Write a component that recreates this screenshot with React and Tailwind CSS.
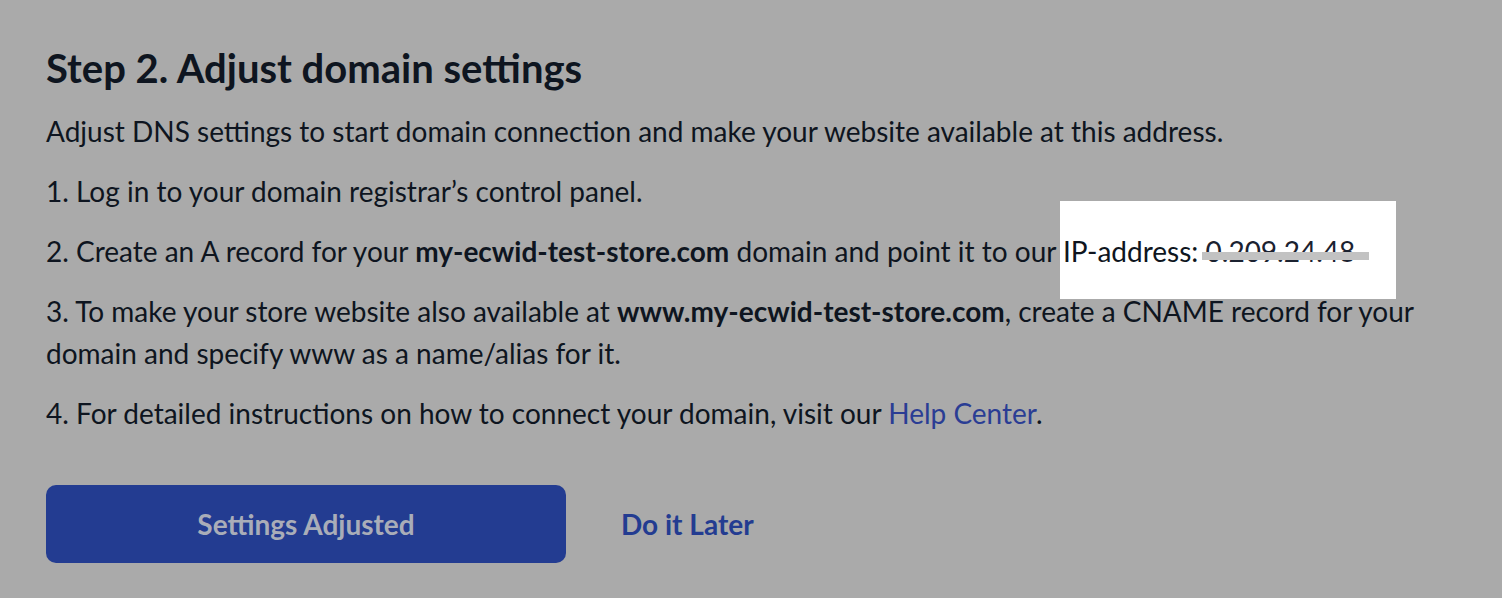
import React from 'react';

export default function App() {
  return (
    <div className="min-h-screen w-full bg-[#aaaaaa] font-['Lato',sans-serif] text-[#0e1520]">
      <div className="px-[46px] pt-[44px] pr-[60px]">
        <h1 className="text-[40px] leading-[48px] font-bold">Step 2. Adjust domain settings</h1>
        <p className="mt-[18px] text-[28px] leading-[42px]">
          Adjust DNS settings to start domain connection and make your website available at this address.
        </p>
        <p className="mt-[18px] text-[28px] leading-[42px]">1. Log in to your domain registrar’s control panel.</p>
        <p className="mt-[18px] text-[28px] leading-[42px]">
          2. Create an A record for your <b className="font-bold">my-ecwid-test-store.com</b> domain and point it to our{' '}
          <span className="relative inline-block">
            <span className="absolute left-[-3px] right-[-41px] top-[-29px] bottom-[-27px] bg-white"></span>
            <span className="relative">IP-address: </span>
            <span className="relative text-[#1b2230]">
              0.209.24.48
              <span className="absolute left-[-4px] right-[-14px] top-[18px] h-[8px] bg-[#c2c2c2]"></span>
            </span>
          </span>
        </p>
        <p className="mt-[18px] text-[28px] leading-[42px]">
          3. To make your store website also available at <b className="font-bold">www.my-ecwid-test-store.com</b>, create a CNAME record for your domain and specify www as a name/alias for it.
        </p>
        <p className="mt-[18px] text-[28px] leading-[42px]">
          4. For detailed instructions on how to connect your domain, visit our <a className="text-[#2a3d94]">Help Center</a>.
        </p>
        <div className="mt-[51px] flex items-center gap-[55px]">
          <button className="w-[520px] h-[78px] rounded-[10px] bg-[#233c91] text-[28px] font-bold text-[#a9adb8]">
            Settings Adjusted
          </button>
          <a className="text-[28px] font-bold text-[#233c91]">Do it Later</a>
        </div>
      </div>
    </div>
  );
}
